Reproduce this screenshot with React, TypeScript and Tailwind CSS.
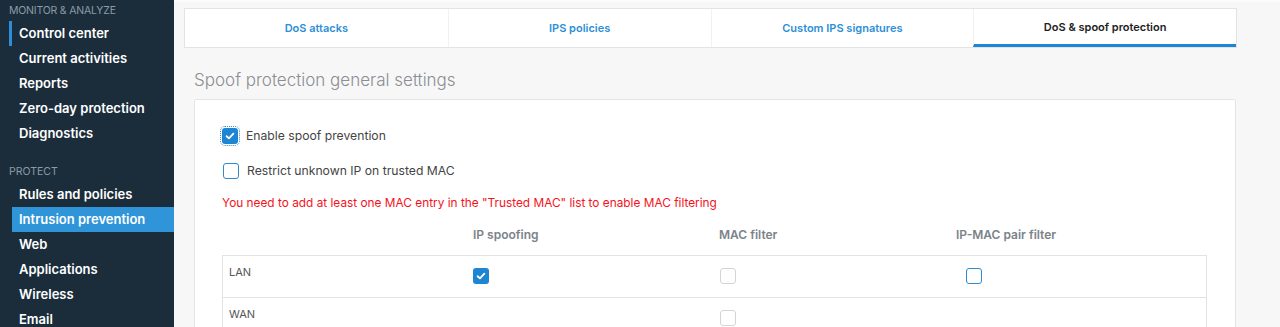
import React from 'react'

const monitorItems = ['Control center', 'Current activities', 'Reports', 'Zero-day protection', 'Diagnostics']
const protectItems = ['Rules and policies', 'Intrusion prevention', 'Web', 'Applications', 'Wireless', 'Email']
const tabs = ['DoS attacks', 'IPS policies', 'Custom IPS signatures', 'DoS & spoof protection']

function CheckMark() {
  return (
    <svg viewBox="0 0 16 16" className="w-[12px] h-[12px]">
      <path d="M3.5 8.3 L6.6 11.2 L12.5 4.8" fill="none" stroke="white" strokeWidth="2.4" strokeLinecap="round" strokeLinejoin="round" />
    </svg>
  )
}

function Box({ state }: { state: 'checked' | 'empty' | 'disabled' }) {
  if (state === 'checked') {
    return (
      <div className="w-[16px] h-[16px] rounded-[3px] bg-[#1d85d1] flex items-center justify-center">
        <CheckMark />
      </div>
    )
  }
  if (state === 'disabled') {
    return <div className="w-[16px] h-[16px] rounded-[3px] border border-[#d2d5d7] bg-white" />
  }
  return <div className="w-[16px] h-[16px] rounded-[3px] border-[1.5px] border-[#2f8ad0] bg-white" />
}

function NavItem({ label, active, selected }: { label: string; active?: boolean; selected?: boolean }) {
  return (
    <div className="h-[25px] pl-[9px] flex">
      <div className={`w-[3px] ${active ? 'bg-[#2d8fd8]' : ''}`} />
      <div
        className={`flex-1 flex items-center pl-[7px] text-[13px] font-semibold text-white ${selected ? 'bg-[#3095d8]' : ''}`}
      >
        {label}
      </div>
    </div>
  )
}

export default function App() {
  return (
    <div className="w-[1280px] h-[327px] overflow-hidden flex font-['Inter',sans-serif]">
      {/* sidebar */}
      <aside className="w-[174px] shrink-0 bg-[#1b2d3b]">
        <div className="h-[21px] pl-[9px] pt-[3px] text-[10.5px] tracking-[-0.2px] text-[#8c9aa6]">MONITOR &amp; ANALYZE</div>
        {monitorItems.map((m, i) => (
          <NavItem key={m} label={m} active={i === 0} />
        ))}
        <div className="mt-[15px] h-[21px] pl-[9px] flex items-center text-[10.5px] text-[#8c9aa6]">PROTECT</div>
        {protectItems.map((m) => (
          <NavItem key={m} label={m} selected={m === 'Intrusion prevention'} />
        ))}
      </aside>

      {/* main */}
      <main className="flex-1 bg-[#f7f7f8] border-t-2 border-[#fcfcfc] pl-[10px] pr-[43px] pt-[6px]">
        <div className="h-[40px] grid grid-cols-4 bg-white border border-[#e2e3e4]">
          {tabs.map((t, i) => (
            <div
              key={t}
              className={`flex items-center justify-center text-[11px] font-semibold ${
                i > 0 ? 'border-l border-[#f1f1f2]' : ''
              } ${i === 3 ? 'text-[#222] border-b-[3px] border-b-[#1d85d1] pt-[2px]' : 'text-[#2e8fd6] pt-[1px]'}`}
            >
              {t}
            </div>
          ))}
        </div>

        <div className="pl-[10px] pr-[1px]">
          <h2 className="h-[51px] flex items-end pb-[6px] text-[17px] font-light text-[#8a8e92]">
            Spoof protection general settings
          </h2>

          <div className="bg-white border border-[#e4e5e6] rounded-[2px] pl-[27px] pr-[28px] pt-[27px] h-[260px]">
            <div className="h-[18px] flex items-center gap-[8px]">
              <div className="outline outline-1 outline-dotted outline-[#2f8ad0] outline-offset-[1px] rounded-[3px]">
                <Box state="checked" />
              </div>
              <span className="text-[12.2px] text-[#444]">Enable spoof prevention</span>
            </div>
            <div className="h-[18px] mt-[17px] flex items-center gap-[8px]">
              <div className="ml-[1px]">
                <Box state="empty" />
              </div>
              <span className="text-[12.2px] text-[#444]">Restrict unknown IP on trusted MAC</span>
            </div>
            <div className="mt-[15px] h-[18px] flex items-center text-[11.85px] text-[#f5111b]">
              You need to add at least one MAC entry in the "Trusted MAC" list to enable MAC filtering
            </div>

            <div className="mt-[8px] h-[28px] grid grid-cols-[251px_246px_237px_1fr] items-center text-[12px] font-semibold text-[#7b8389]">
              <div />
              <div>IP spoofing</div>
              <div>MAC filter</div>
              <div>IP-MAC pair filter</div>
            </div>

            <div className="mt-[6px] border border-[#e2e3e4]">
              <div className="h-[42px] grid grid-cols-[250px_247px_246px_1fr] items-center border-b border-[#e2e3e4] pb-[2px]">
                <div className="self-start pt-[8px] pl-[6px] text-[11px] text-[#555]">LAN</div>
                <div><Box state="checked" /></div>
                <div><Box state="disabled" /></div>
                <div><Box state="empty" /></div>
              </div>
              <div className="h-[42px] grid grid-cols-[250px_247px_246px_1fr] items-center pb-[2px]">
                <div className="self-start pt-[8px] pl-[6px] text-[11px] text-[#555]">WAN</div>
                <div />
                <div><Box state="disabled" /></div>
                <div />
              </div>
            </div>
          </div>
        </div>
      </main>
    </div>
  )
}
